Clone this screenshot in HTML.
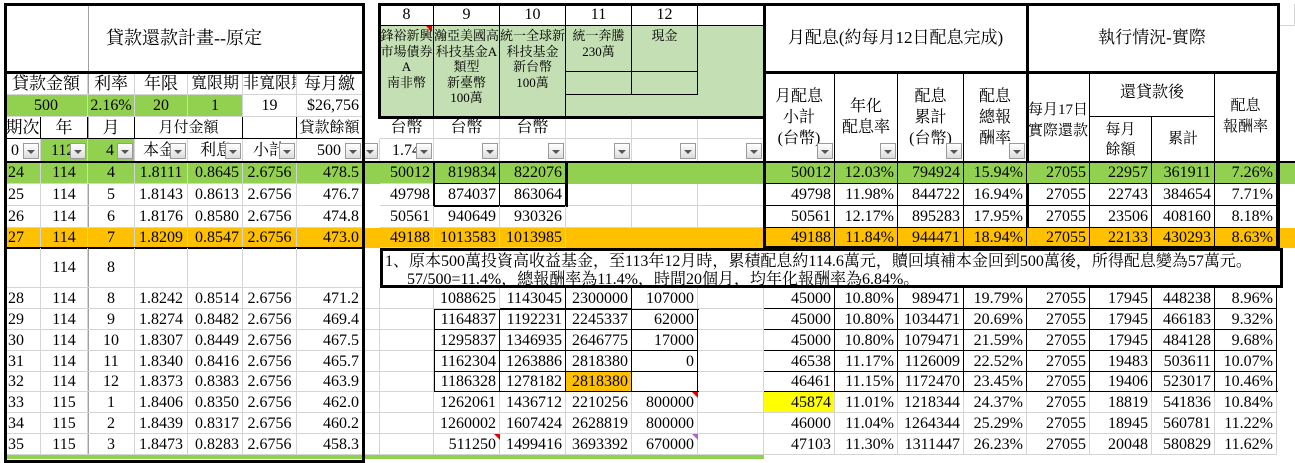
<!DOCTYPE html>
<html><head><meta charset="utf-8"><style>
*{margin:0;padding:0;box-sizing:border-box}
body{width:1295px;height:459px;overflow:hidden;background:#fff;position:relative;font-family:"Liberation Serif","Noto Serif CJK SC",serif;font-size:16px;color:#000}
.r{position:absolute;left:0;width:1295px}
.r>span{position:absolute;top:0;height:100%;border-right:1px solid #d4d4d4;border-bottom:1px solid #d4d4d4;text-align:right;padding-right:3px;white-space:nowrap;overflow:hidden}
.a{left:5px;width:36px}.b{left:41px;width:47px}.c{left:88px;width:47px}.d{left:135px;width:53px}.e{left:188px;width:55px}.f{left:243px;width:54px}.g{left:297px;width:66px}.h{left:363px;width:17px}
.i{left:380px;width:54px}.j{left:434px;width:66px}.k{left:500px;width:66px}.l{left:566px;width:66px}.m{left:632px;width:66px}.n{left:698px;width:66px}
.o{left:764px;width:71px}.p{left:835px;width:63px}.q{left:898px;width:66px}.s1{left:964px;width:63px}.s{left:1027px;width:63px}.t{left:1090px;width:62px}.u{left:1152px;width:63px}.v{left:1215px;width:62px}.w{left:1277px;width:18px}
.r>span.cc{text-align:center;padding-right:0}
.r>span.bk{border-color:#000}
.gr{background:#92d050}.or{background:#ffc000}
.box{position:absolute;border:3px solid #000}
.hl{position:absolute;background:#000}
.t1{position:absolute;text-align:center;line-height:1.2}
.dd{position:absolute;right:1px;bottom:2px;width:16px;height:16px;border:1px solid #9a9a9a;background:linear-gradient(#fff,#dcdcdc)}
.dd:after{content:"";position:absolute;left:3px;top:6px;border-left:4px solid transparent;border-right:4px solid transparent;border-top:4px solid #555}
.lg{background:#c4dfb3}
.mh>span{padding-right:0!important;padding-top:2px}
</style></head><body>

<div class="r" style="top:4px;height:22px"><span class="w"></span></div>

<div class="t1" style="left:5px;top:4px;width:358px;height:68px;line-height:68px;font-size:18px">貸款還款計畫--原定</div>
<div class="hl" style="left:88px;top:4px;width:1px;height:451px;background:#a0a0a0"></div>

<div class="r" style="top:72px;height:23px;line-height:23px">
<span class="cc" style="left:5px;width:83px;font-size:17px">貸款金額</span><span class="c cc" style="font-size:17px">利率</span><span class="d cc" style="font-size:17px">年限</span><span class="e cc" style="font-size:16px">寬限期</span><span class="f cc" style="font-size:16px">非寬限期</span><span class="g cc" style="font-size:17px">每月繳</span>
</div>
<div class="r" style="top:95px;height:22px;line-height:22px">
<span class="cc gr" style="left:5px;width:83px">500</span><span class="c cc gr">2.16%</span><span class="d cc gr">20</span><span class="e cc gr">1</span><span class="f cc">19</span><span class="g">$26,756</span>
</div>
<div class="r" style="top:117px;height:22px;line-height:22px">
<span class="a cc bk" style="font-size:17px">期次</span><span class="b cc bk" style="font-size:17px">年</span><span class="c cc bk" style="font-size:17px">月</span><span class="cc bk" style="left:135px;width:108px;font-size:15px">月付金額</span><span class="f bk"></span><span class="g cc bk" style="font-size:15px">貸款餘額</span>
<span class="i cc">台幣</span><span class="j cc">台幣</span><span class="k cc">台幣</span><span class="l"></span><span class="m"></span><span class="n"></span>
</div>
<div class="r" style="top:139px;height:23px;line-height:23px">
<span class="a" style="text-align:left;padding-left:6px">0<i class="dd"></i></span><span class="b gr" style="text-align:left;padding-left:10px">112<i class="dd"></i></span><span class="c gr" style="text-align:left;padding-left:18px">4<i class="dd"></i></span><span class="d" style="text-align:left;padding-left:8px">本金<i class="dd"></i></span><span class="e" style="text-align:left;padding-left:12px">利息<i class="dd"></i></span><span class="f" style="text-align:left;padding-left:10px">小計<i class="dd"></i></span><span class="g" style="text-align:left;padding-left:20px">500<i class="dd"></i></span><span class="h"><i class="dd"></i></span>
<span class="i" style="text-align:left;padding-left:12px">1.74<i class="dd"></i></span><span class="j"><i class="dd"></i></span><span class="k"><i class="dd"></i></span><span class="l"><i class="dd"></i></span><span class="m"><i class="dd"></i></span><span class="n"><i class="dd"></i></span>
</div>

<div class="lg" style="position:absolute;left:380px;top:26px;width:384px;height:91px"></div>
<div class="r" style="top:4px;height:22px;line-height:22px">
<span class="i cc bk">8</span><span class="j cc bk">9</span><span class="k cc bk">10</span><span class="l cc bk">11</span><span class="m cc bk">12</span><span class="n bk"></span>
</div>
<div class="r mh" style="top:26px;height:91px;line-height:15.5px;font-size:13px">
<span class="i cc bk" style="border-bottom:0">鋒裕新興<br>市場債券<br>A<br>南非幣</span><span class="j cc bk" style="border-bottom:0">瀚亞美國高<br>科技基金A<br>類型<br>新臺幣<br>100萬</span><span class="k cc bk" style="border-bottom:0">統一全球新<br>科技基金<br>新台幣<br>100萬</span><span class="l cc bk" style="height:46px">統一奔騰<br>230萬</span><span class="m cc bk" style="height:46px">現金</span><span class="n bk" style="border-bottom:0"></span>
</div>
<div class="r" style="top:72px;height:23px"><span class="l bk"></span><span class="m bk"></span></div>
<div style="position:absolute;left:426px;top:26px;border-left:6px solid transparent;border-top:6px solid #e00000"></div>
<div class="box" style="left:378px;top:3px;width:388px;height:116px"></div>

<div class="t1" style="left:764px;top:4px;width:263px;height:68px;line-height:68px;font-size:17px">月配息(約每月12日配息完成)</div>
<div class="t1" style="left:1027px;top:4px;width:250px;height:68px;line-height:68px;font-size:17px">執行情況-實際</div>
<div class="r" style="top:72px;height:90px;font-size:16px;line-height:21px">
<span class="o cc bk" style="padding-top:14px">月配息<br>小計<br>(台幣)<i class="dd"></i></span>
<span class="p cc bk" style="padding-top:24px">年化<br>配息率<i class="dd"></i></span>
<span class="q cc bk" style="padding-top:14px">配息<br>累計<br>(台幣)<i class="dd"></i></span>
<span class="s1 cc bk" style="padding-top:14px">配息<br>總報<br>酬率<i class="dd"></i></span>
<span class="s cc bk" style="padding-top:28px;font-size:15px">每月17日<br>實際還款</span>
<span class="cc bk" style="left:1090px;width:125px;height:45px;line-height:42px">還貸款後</span>
<span class="v cc bk" style="padding-top:24px;font-size:15px">配息<br>報酬率</span>
</div>
<div class="r" style="top:117px;height:45px;font-size:15px;line-height:20px">
<span class="t cc bk" style="padding-top:3px">每月<br>餘額</span><span class="u cc bk" style="line-height:45px">累計</span>
</div>
<div class="hl" style="left:764px;top:71px;width:514px;height:3px"></div>
<div class="hl" style="left:1026px;top:4px;width:3px;height:244px"></div>

<div class="r gr" style="top:162px;height:22px;line-height:22px;left:5px;width:1290px"></div>
<div class="r" style="top:162px;height:22px;line-height:22px">
<span class="a" style="text-align:left;padding-left:3px">24</span><span class="b cc">114</span><span class="c cc">4</span><span class="d cc">1.8111</span><span class="e">0.8645</span><span class="f cc">2.6756</span><span class="g">478.5</span>
<span class="i">50012</span><span class="j bk">819834</span><span class="k bk">822076</span>
<span class="o bk">50012</span><span class="p bk">12.03%</span><span class="q bk">794924</span><span class="s1 bk">15.94%</span><span class="s bk">27055</span><span class="t bk">22957</span><span class="u bk">361911</span><span class="v bk">7.26%</span>
</div>
<div class="r" style="top:184px;height:22px;line-height:22px">
<span class="a" style="text-align:left;padding-left:3px">25</span><span class="b cc">114</span><span class="c cc">5</span><span class="d cc">1.8143</span><span class="e">0.8613</span><span class="f cc">2.6756</span><span class="g">476.7</span>
<span class="i">49798</span><span class="j bk">874037</span><span class="k bk">863064</span><span class="l"></span><span class="m"></span><span class="n"></span>
<span class="o bk">49798</span><span class="p bk">11.98%</span><span class="q bk">844722</span><span class="s1 bk">16.94%</span><span class="s bk">27055</span><span class="t bk">22743</span><span class="u bk">384654</span><span class="v bk">7.71%</span>
</div>
<div class="box" style="left:433px;top:161px;width:135px;height:46px;border-width:2px"></div>
<div class="r" style="top:206px;height:22px;line-height:22px">
<span class="a" style="text-align:left;padding-left:3px">26</span><span class="b cc">114</span><span class="c cc">6</span><span class="d cc">1.8176</span><span class="e">0.8580</span><span class="f cc">2.6756</span><span class="g">474.8</span>
<span class="i">50561</span><span class="j">940649</span><span class="k">930326</span><span class="l"></span><span class="m"></span><span class="n"></span>
<span class="o bk">50561</span><span class="p bk">12.17%</span><span class="q bk">895283</span><span class="s1 bk">17.95%</span><span class="s bk">27055</span><span class="t bk">23506</span><span class="u bk">408160</span><span class="v bk">8.18%</span>
</div>
<div class="r or" style="top:228px;height:20px;left:5px;width:1290px"></div>
<div class="r" style="top:228px;height:20px;line-height:20px">
<span class="a" style="text-align:left;padding-left:3px">27</span><span class="b cc">114</span><span class="c cc">7</span><span class="d cc">1.8209</span><span class="e">0.8547</span><span class="f cc">2.6756</span><span class="g">473.0</span>
<span class="i">49188</span><span class="j">1013583</span><span class="k">1013985</span>
<span class="o bk">49188</span><span class="p bk">11.84%</span><span class="q bk">944471</span><span class="s1 bk">18.94%</span><span class="s bk">27055</span><span class="t bk">22133</span><span class="u bk">430293</span><span class="v bk">8.63%</span>
</div>
<div class="hl" style="left:5px;top:161px;width:1290px;height:2px"></div>
<div class="hl" style="left:5px;top:247px;width:360px;height:2px"></div>

<div class="r" style="top:248px;height:40px;line-height:40px">
<span class="a"></span><span class="b cc">114</span><span class="c cc">8</span><span class="d"></span><span class="e"></span><span class="f"></span><span class="g"></span>
</div>
<div style="position:absolute;left:380px;top:248px;width:903px;height:40px;border:3px solid #000;font-size:16px;line-height:18px;padding:2px 0 0 2px;white-space:nowrap;overflow:hidden">1、原本500萬投資高收益基金，至113年12月時，累積配息約114.6萬元，贖回填補本金回到500萬後，所得配息變為57萬元。<br><span style="padding-left:22px">57/500=11.4%，總報酬率為11.4%，時間20個月，均年化報酬率為6.84%。</span></div>

<div class="r" style="top:288px;height:21px;line-height:21px">
<span class="a" style="text-align:left;padding-left:3px">28</span><span class="b cc">114</span><span class="c cc">8</span><span class="d cc">1.8242</span><span class="e">0.8514</span><span class="f cc">2.6756</span><span class="g">471.2</span><span class="h"></span>
<span class="i"></span><span class="j">1088625</span><span class="k bk">1143045</span><span class="l bk">2300000</span><span class="m">107000</span><span class="n"></span>
<span class="o bk">45000</span><span class="p bk">10.80%</span><span class="q bk">989471</span><span class="s1 bk">19.79%</span><span class="s bk">27055</span><span class="t bk">17945</span><span class="u bk">448238</span><span class="v bk">8.96%</span>
</div>
<div class="r" style="top:309px;height:21px;line-height:21px">
<span class="a" style="text-align:left;padding-left:3px">29</span><span class="b cc">114</span><span class="c cc">9</span><span class="d cc">1.8274</span><span class="e">0.8482</span><span class="f cc">2.6756</span><span class="g">469.4</span><span class="h"></span>
<span class="i"></span><span class="j bk">1164837</span><span class="k bk">1192231</span><span class="l bk">2245337</span><span class="m bk">62000</span><span class="n"></span>
<span class="o bk">45000</span><span class="p bk">10.80%</span><span class="q bk">1034471</span><span class="s1 bk">20.69%</span><span class="s bk">27055</span><span class="t bk">17945</span><span class="u bk">466183</span><span class="v bk">9.32%</span>
</div>
<div class="r" style="top:330px;height:21px;line-height:21px">
<span class="a" style="text-align:left;padding-left:3px">30</span><span class="b cc">114</span><span class="c cc">10</span><span class="d cc">1.8307</span><span class="e">0.8449</span><span class="f cc">2.6756</span><span class="g">467.5</span><span class="h"></span>
<span class="i"></span><span class="j bk">1295837</span><span class="k bk">1346935</span><span class="l bk">2646775</span><span class="m bk">17000</span><span class="n"></span>
<span class="o bk">45000</span><span class="p bk">10.80%</span><span class="q bk">1079471</span><span class="s1 bk">21.59%</span><span class="s bk">27055</span><span class="t bk">17945</span><span class="u bk">484128</span><span class="v bk">9.68%</span>
</div>
<div class="r" style="top:351px;height:21px;line-height:21px">
<span class="a" style="text-align:left;padding-left:3px">31</span><span class="b cc">114</span><span class="c cc">11</span><span class="d cc">1.8340</span><span class="e">0.8416</span><span class="f cc">2.6756</span><span class="g">465.7</span><span class="h"></span>
<span class="i"></span><span class="j bk">1162304</span><span class="k bk">1263886</span><span class="l bk">2818380</span><span class="m bk">0</span><span class="n"></span>
<span class="o bk">46538</span><span class="p bk">11.17%</span><span class="q bk">1126009</span><span class="s1 bk">22.52%</span><span class="s bk">27055</span><span class="t bk">19483</span><span class="u bk">503611</span><span class="v bk">10.07%</span>
</div>
<div class="r" style="top:372px;height:20px;line-height:20px">
<span class="a" style="text-align:left;padding-left:3px">32</span><span class="b cc">114</span><span class="c cc">12</span><span class="d cc">1.8373</span><span class="e">0.8383</span><span class="f cc">2.6756</span><span class="g">463.9</span><span class="h"></span>
<span class="i"></span><span class="j bk">1186328</span><span class="k bk">1278182</span><span class="l bk or">2818380</span><span class="m bk"></span><span class="n"></span>
<span class="o bk">46461</span><span class="p bk">11.15%</span><span class="q bk">1172470</span><span class="s1 bk">23.45%</span><span class="s bk">27055</span><span class="t bk">19406</span><span class="u bk">523017</span><span class="v bk">10.46%</span>
</div>
<div class="hl" style="left:434px;top:309px;width:265px;height:1px"></div>
<div class="hl" style="left:434px;top:309px;width:1px;height:83px"></div>
<div class="hl" style="left:434px;top:391px;width:265px;height:1px"></div>
<div class="hl" style="left:764px;top:391px;width:514px;height:1px"></div>
<div class="r" style="top:392px;height:21px;line-height:21px">
<span class="a" style="text-align:left;padding-left:3px">33</span><span class="b cc">115</span><span class="c cc">1</span><span class="d cc">1.8406</span><span class="e">0.8350</span><span class="f cc">2.6756</span><span class="g">462.0</span><span class="h"></span>
<span class="i"></span><span class="j">1262061</span><span class="k">1436712</span><span class="l">2210256</span><span class="m">800000</span><span class="n"></span>
<span class="o" style="background:#ffff00">45874</span><span class="p">11.01%</span><span class="q">1218344</span><span class="s1">24.37%</span><span class="s">27055</span><span class="t">18819</span><span class="u">541836</span><span class="v">10.84%</span>
</div>
<div class="r" style="top:413px;height:21px;line-height:21px">
<span class="a" style="text-align:left;padding-left:3px">34</span><span class="b cc">115</span><span class="c cc">2</span><span class="d cc">1.8439</span><span class="e">0.8317</span><span class="f cc">2.6756</span><span class="g">460.2</span><span class="h"></span>
<span class="i"></span><span class="j">1260002</span><span class="k">1607424</span><span class="l">2628819</span><span class="m">800000</span><span class="n"></span>
<span class="o">46000</span><span class="p">11.04%</span><span class="q">1264344</span><span class="s1">25.29%</span><span class="s">27055</span><span class="t">18945</span><span class="u">560781</span><span class="v">11.22%</span>
</div>
<div class="r" style="top:434px;height:21px;line-height:21px">
<span class="a" style="text-align:left;padding-left:3px">35</span><span class="b cc">115</span><span class="c cc">3</span><span class="d cc">1.8473</span><span class="e">0.8283</span><span class="f cc">2.6756</span><span class="g">458.3</span><span class="h"></span>
<span class="i"></span><span class="j">511250</span><span class="k">1499416</span><span class="l">3693392</span><span class="m">670000</span><span class="n"></span>
<span class="o">47103</span><span class="p">11.30%</span><span class="q">1311447</span><span class="s1">26.23%</span><span class="s">27055</span><span class="t">20048</span><span class="u">580829</span><span class="v">11.62%</span>
</div>
<div style="position:absolute;left:692px;top:392px;border-left:6px solid transparent;border-top:6px solid #e00000"></div>
<div style="position:absolute;left:494px;top:434px;border-left:6px solid transparent;border-top:6px solid #e00000"></div>
<div style="position:absolute;left:692px;top:434px;border-left:6px solid transparent;border-top:6px solid #b060d0"></div>
<div style="position:absolute;left:5px;top:455px;width:759px;height:4px;background:#92d050"></div>

<div class="box" style="left:4px;top:3px;width:361px;height:460px"></div>
<div class="hl" style="left:5px;top:71px;width:360px;height:3px"></div>
<div class="box" style="left:763px;top:3px;width:517px;height:246px"></div>
</body></html>
